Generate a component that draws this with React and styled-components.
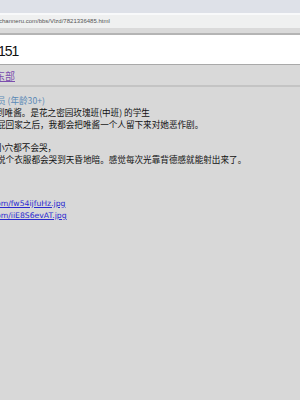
import styled, { createGlobalStyle } from 'styled-components';

const GlobalStyle = createGlobalStyle`
  html, body {
    margin: 0;
    padding: 0;
    background: #d8d8d8;
    overflow: hidden;
  }
`;

const Page = styled.div`
  width: 300px;
  height: 400px;
  overflow: hidden;
  display: flex;
  flex-direction: column;
  background: #d8d8d8;
  font-family: "Liberation Sans", "Noto Sans CJK SC", sans-serif;
`;

const TabStrip = styled.div`
  height: 13px;
  background: #dee1e8;
  border-bottom: 2px solid #f8f9fa;
`;

const UrlBar = styled.div`
  height: 13px;
  background: #eff0f0;
  color: #555;
  font-size: 6px;
  line-height: 13px;
  white-space: nowrap;
  overflow: hidden;
  text-indent: -1px;
`;

const Divider = styled.div`
  height: ${p => p.$h}px;
  background: ${p => p.$bg};
  border-bottom: ${p => p.$line}px solid ${p => p.$lineColor};
`;

const TitleBox = styled.div`
  height: 30px;
  background: #ffffff;
  border-bottom: 1px solid #a9a9a9;
  display: flex;
  align-items: center;
  font-size: 14px;
  color: #111;
  padding-top: 2px;
  box-sizing: border-box;
`;

const Title = styled.span`
  margin-left: -2px;
  letter-spacing: -1px;
`;

const NavBar = styled.div`
  height: 20px;
  background: #d9d9d9;
  border-bottom: 2px solid #c4c4c4;
  display: flex;
  align-items: center;
`;

const NavLink = styled.a`
  color: #7b4fae;
  font-family: "Noto Sans CJK SC", sans-serif;
  font-size: 10px;
  text-decoration: underline;
  margin-left: -5px;
`;

const Post = styled.div`
  padding-top: 8px;
  font-family: "Noto Sans CJK SC", sans-serif;
  font-size: 8.6px;
  line-height: 11.8px;
  color: #111;
  white-space: nowrap;
`;

const Line = styled.div`
  margin-left: ${p => p.$shift || 0}px;
  height: 11.8px;
  margin-bottom: ${p => p.$gap || 0}px;
`;

const Name = styled.span`
  color: #5a89b6;
`;

const ImgLink = styled.a`
  color: #2a2ad0;
  text-decoration: underline;
  font-family: "DejaVu Sans", sans-serif;
  font-size: 7.7px;
`;

export default function App() {
  return (
    <Page>
      <GlobalStyle />
      <TabStrip />
      <UrlBar>channeru.com/bbs/Vlzd/7821336485.html</UrlBar>
      <Divider $h={5} $bg="#dadada" $line={2} $lineColor="#b4b4b4" />
      <TitleBox>
        <Title>151</Title>
      </TitleBox>
      <NavBar>
        <NavLink>东部</NavLink>
      </NavBar>
      <Post>
        <Line $shift={-3}>
          <Name>员 (年龄30+)</Name>
        </Line>
        <Line $shift={-4}>到唯酱。是花之密园玫瑰班(中班) 的学生</Line>
        <Line $shift={-3} $gap={11.8}>屁回家之后，我都会把唯酱一个人留下来对她恶作剧。</Line>
        <Line $shift={-4}>小穴都不会哭，</Line>
        <Line $shift={-3} $gap={31}>说个衣服都会哭到天昏地暗。感觉每次光靠背德感就能射出来了。</Line>
        <Line $shift={-4}>
          <ImgLink>om/fw54ijfuHz.jpg</ImgLink>
        </Line>
        <Line $shift={-4}>
          <ImgLink>om/iiE8S6evAT.jpg</ImgLink>
        </Line>
      </Post>
    </Page>
  );
}
